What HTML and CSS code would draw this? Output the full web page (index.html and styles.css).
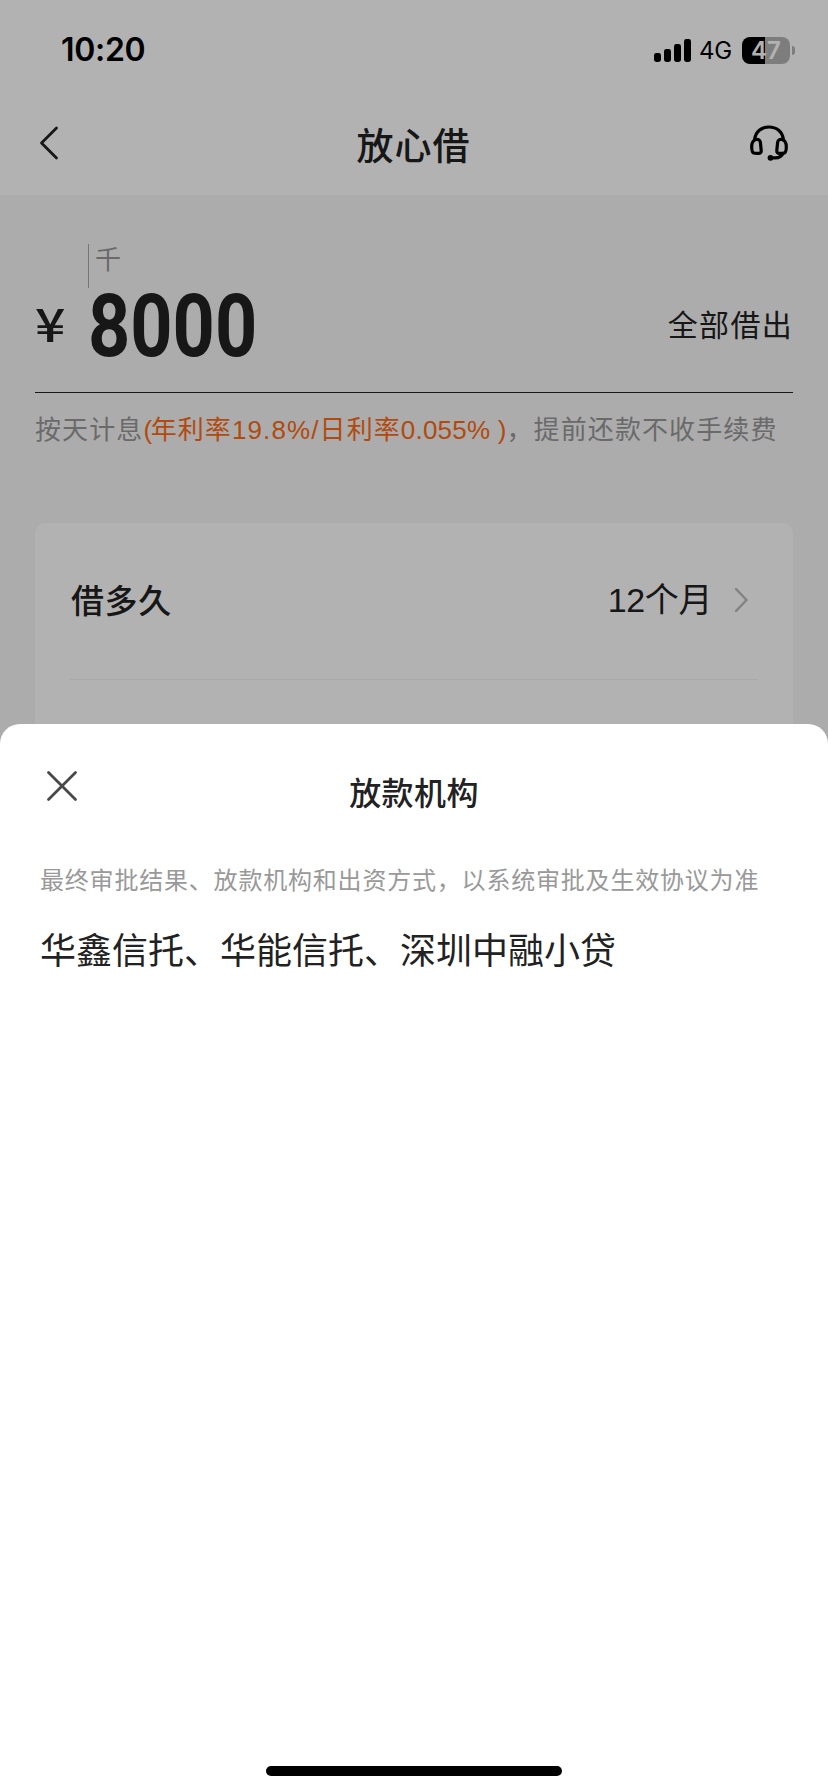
FILE: index.html
```html
<!DOCTYPE html>
<html lang="zh-CN">
<head>
<meta charset="utf-8">
<title>放心借</title>
<link rel="stylesheet" href="styles.css">
</head>
<body>
<div class="phone">
  <header class="top">
    <div class="status">
      <span class="time">10:20</span>
      <div class="indicators">
        <svg class="signal" width="37" height="23" viewBox="0 0 37 23">
          <rect x="0" y="14" width="7" height="9" rx="2.4"/>
          <rect x="10" y="10" width="7" height="13" rx="2.4"/>
          <rect x="20" y="5" width="7" height="18" rx="2.4"/>
          <rect x="30" y="0" width="7" height="23" rx="2.4"/>
        </svg>
        <span class="network">4G</span>
        <div class="battery"><span class="level">47</span></div>
        <i class="nub"></i>
      </div>
    </div>
    <nav class="nav">
      <svg class="back" width="20" height="36" viewBox="0 0 20 36"><path d="M17.500 3 2.500 18 17.500 33"/></svg>
      <h1 class="title">放心借</h1>
      <svg class="service" width="38" height="36" viewBox="0 0 38 36">
        <path d="M4.600 14.500C5.500 6.500 11.500 2 19 2S32.500 6.500 33.400 14.500"/>
        <path d="M6 14.500Q1.700 15.500 1.700 22Q1.700 28 4.500 28.200L8.500 28.300Q11.400 28.300 11.200 25.500L10.400 17.500Q10 14 6 14.500Z"/>
        <path d="M32 14.500Q36.300 15.500 36.300 22Q36.300 28 33.500 28.200L29.500 28.300Q26.600 28.300 26.800 25.500L27.600 17.500Q28 14 32 14.500Z"/>
        <path d="M33 28.500Q31 32.700 25.500 32.900H21"/>
        <circle cx="20.500" cy="32.800" r="2.900"/>
      </svg>
    </nav>
  </header>
  <main class="content">
    <div class="unit"><span class="unit-text">千</span></div>
    <div class="amount">
      <span class="yen">¥</span>
      <span class="number">8000</span>
      <span class="all">全部借出</span>
    </div>
    <p class="rate">按天计息<span class="hot"><span class="num paren">(</span>年利率<span class="num">19.8%/</span>日利率<span class="num tight">0.055% )</span></span>，提前还款不收手续费</p>
    <section class="card">
      <div class="row">
        <span class="label">借多久</span>
        <span class="value">12个月</span>
        <svg class="chevron" width="14" height="26" viewBox="0 0 14 26"><path d="M2 2 12.500 13 2 24"/></svg>
      </div>
    </section>
  </main>
  <div class="mask"></div>
  <section class="sheet">
    <div class="sheet-head">
      <svg class="close" width="32" height="32" viewBox="0 0 32 32"><path d="M2.500 2.500 29.500 29.500M29.500 2.500 2.500 29.500"/></svg>
      <h2 class="sheet-title">放款机构</h2>
    </div>
    <p class="note">最终审批结果、放款机构和出资方式，以系统审批及生效协议为准</p>
    <p class="lenders">华鑫信托、华能信托、深圳中融小贷</p>
    <div class="home"></div>
  </section>
</div>
</body>
</html>
```
FILE: styles.css
```css
* { box-sizing: border-box; }
body, h1, h2, p { margin: 0; }
body {
  font-family: "Liberation Sans", "Noto Sans CJK SC", sans-serif;
  color: #222;
}
svg { display: block; flex: none; fill: none; stroke-linecap: round; stroke-linejoin: round; }
.phone {
  position: relative;
  width: 828px;
  height: 1792px;
  overflow: hidden;
  background: #f7f7f7;
}
.top { height: 195px; background: #fff; }

/* Status bar */
.status {
  display: flex;
  align-items: center;
  justify-content: space-between;
  height: 100px;
  padding: 0 33px 0 61px;
  font-family: Inter, sans-serif;
  color: #000;
}
.time { font-size: 32px; font-weight: 600; line-height: 40px; letter-spacing: -0.3px; }
.indicators { display: flex; align-items: center; }
.signal { fill: #000; }
.network { width: 33px; margin: 2px 10px 0 8px; font-size: 24px; line-height: 28px; letter-spacing: -0.3px; white-space: nowrap; }
.battery {
  width: 48px;
  height: 27px;
  border-radius: 8px;
  background: linear-gradient(90deg, #000 23px, #b4b4b4 23px);
}
.level {
  display: block;
  font-size: 24px;
  font-weight: 600;
  line-height: 27px;
  text-align: center;
  color: #fff;
}
.nub { width: 3px; height: 9px; margin-left: 2px; border-radius: 0 4px 4px 0; background: #b4b4b4; }

/* Navigation bar */
.nav {
  display: grid;
  grid-template-columns: 60px 1fr 60px;
  align-items: center;
  height: 90px;
  padding: 0 40px 5px 39px;
}
.back { stroke: #222; stroke-width: 2.8; }
.title { padding-top: 2px; font-family: "Noto Sans CJK SC", sans-serif; font-size: 37px; font-weight: 500; line-height: 54px; text-align: center; letter-spacing: 1px; }
.service { justify-self: end; stroke: #000; stroke-width: 3.2; }
.service circle { fill: #000; stroke: none; }

/* Amount */
.content { padding: 49px 35px 0; }
.unit { height: 44px; margin-left: 53px; padding-left: 6px; border-left: 1px solid #aaa; }
.unit-text { display: block; font: 26px/28px "Noto Sans CJK SC", sans-serif; color: #999; }
.amount {
  display: flex;
  align-items: center;
  height: 105px;
  padding-bottom: 31px;
  border-bottom: 1px solid #222;
}
.yen { width: 53px; padding-bottom: 5px; font: 500 46px/60px "Noto Sans CJK SC", sans-serif; transform: scaleX(1.16); transform-origin: left; }
.number {
  height: 88px;
  font: 700 88px/90px Roboto, sans-serif;
  transform: scaleX(0.838);
  transform-origin: left;
}
.all { margin-left: auto; padding-bottom: 3px; font: 30px/40px "Noto Sans CJK SC", sans-serif; letter-spacing: 1.3px; }
.rate {
  height: 40px;
  margin-top: 15px;
  font: 26px/40px "Noto Sans CJK SC", sans-serif;
  letter-spacing: 1.1px;
  color: #999;
  white-space: nowrap;
}
.hot { color: #ff6a14; }
.num { font-family: "Liberation Sans", sans-serif; }
.paren { letter-spacing: -1.4px; }
.tight { letter-spacing: 0.2px; }

/* Loan options */
.card { height: 400px; margin-top: 75px; padding: 0 35px; border-radius: 10px; background: #fff; }
.row {
  display: flex;
  align-items: center;
  height: 157px;
  padding-bottom: 3px;
  border-bottom: 1px solid #f2f2f2;
}
.label { padding: 0 0 1px 1px; font: 500 33px/50px "Noto Sans CJK SC", sans-serif; letter-spacing: 0.6px; }
.value { margin-left: auto; font-size: 34px; line-height: 50px; letter-spacing: -0.4px; }
.chevron { margin: 0 10px 0 22px; stroke: #bbb; stroke-width: 2.4; }

.mask { position: absolute; inset: 0; background: rgba(0, 0, 0, 0.3); }

/* Bottom sheet */
.sheet {
  position: absolute;
  inset: 724px 0 0;
  display: flex;
  flex-direction: column;
  padding: 0 40px 16px;
  border-radius: 20px 20px 0 0;
  background: #fff;
  font-family: "Noto Sans CJK SC", sans-serif;
}
.sheet-head {
  display: grid;
  grid-template-columns: 60px 1fr 60px;
  align-items: start;
  height: 135px;
  padding-top: 47px;
}
.close { margin: -1px 0 0 6px; stroke: #484848; stroke-width: 2.8; }
.sheet-title { font-size: 32px; font-weight: 500; line-height: 40px; text-align: center; letter-spacing: 0.4px; }
.note { font-size: 24px; line-height: 40px; letter-spacing: 0.8px; color: #999; white-space: nowrap; }
.lenders { margin-top: 22px; font-size: 36px; line-height: 54px; }
.home { width: 296px; height: 10px; margin: auto auto 0; border-radius: 5px; background: #000; }
```
